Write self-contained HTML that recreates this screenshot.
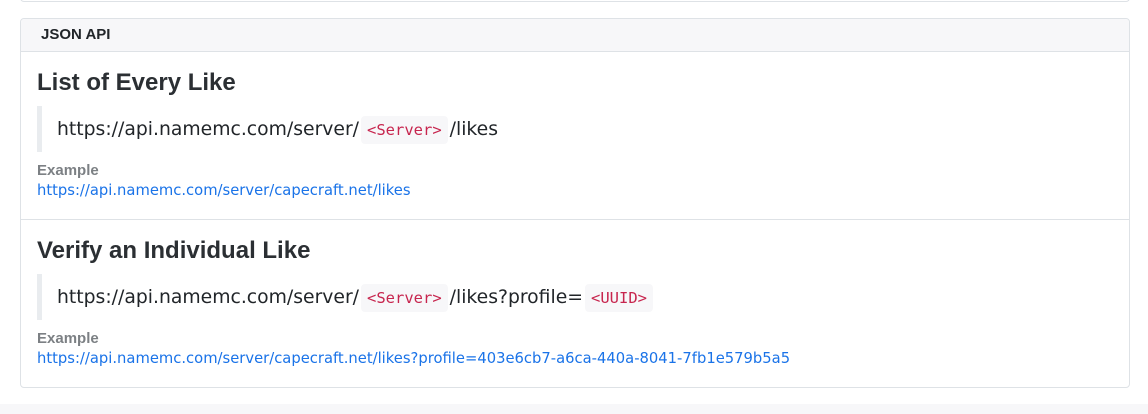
<!DOCTYPE html>
<html><head><style>
body{margin:0;width:1148px;height:414px;background:#fff;font-family:"DejaVu Sans",sans-serif;position:relative;overflow:hidden;color:#212529}
.top{position:absolute;left:20px;top:-10px;width:1108px;height:11px;border:1px solid #dee2e6;border-top:none;border-radius:0 0 4px 4px}
.card{position:absolute;left:20px;top:18px;width:1108px;height:368px;border:1px solid #dee2e6;border-radius:4px}
.hdr{height:32px;background:#f7f7f9;border-bottom:1px solid #dee2e6;font-weight:bold;font-size:15px;line-height:32px;padding-left:20px;border-radius:4px 4px 0 0;font-family:"Liberation Sans",sans-serif}
h2{margin:0;position:absolute;left:16px;font-size:24px;font-weight:bold;color:#2b2f33;font-family:"Liberation Sans",sans-serif}
.bq{position:absolute;left:16px;border-left:5px solid #e9ecef;height:46px;padding-left:15px;font-size:18.8px;line-height:48px;white-space:nowrap}
code{font-family:"DejaVu Sans Mono",monospace;font-size:15.5px;color:#c7254e;background:#f7f7f9;padding:5px 6px;border-radius:4px;margin:0 2px}
.ex{position:absolute;left:16px;font-size:15px;font-weight:bold;color:#7c8084;font-family:"Liberation Sans",sans-serif}
.ln{position:absolute;left:16px;font-size:14.75px;color:#1a73e8;white-space:nowrap}
.sep{position:absolute;left:0;top:200px;width:1108px;border-top:1px solid #dee2e6}
.bot{position:absolute;left:0;top:404px;width:1148px;height:10px;background:#f7f7f9}
</style></head><body>
<div class="top"></div>
<div class="card">
<div class="hdr">JSON API</div>
<h2 style="top:50px">List of Every Like</h2>
<div class="bq" style="top:87px">https://api.namemc.com/server/<code>&lt;Server&gt;</code>/likes</div>
<div class="ex" style="top:143px">Example</div>
<div class="ln" style="top:163px">https://api.namemc.com/server/capecraft.net/likes</div>
<div class="sep"></div>
<h2 style="top:218px">Verify an Individual Like</h2>
<div class="bq" style="top:255px">https://api.namemc.com/server/<code>&lt;Server&gt;</code>/likes?profile=<code>&lt;UUID&gt;</code></div>
<div class="ex" style="top:311px">Example</div>
<div class="ln" style="top:331px">https://api.namemc.com/server/capecraft.net/likes?profile=403e6cb7-a6ca-440a-8041-7fb1e579b5a5</div>
</div>
<div class="bot"></div>
</body></html>
